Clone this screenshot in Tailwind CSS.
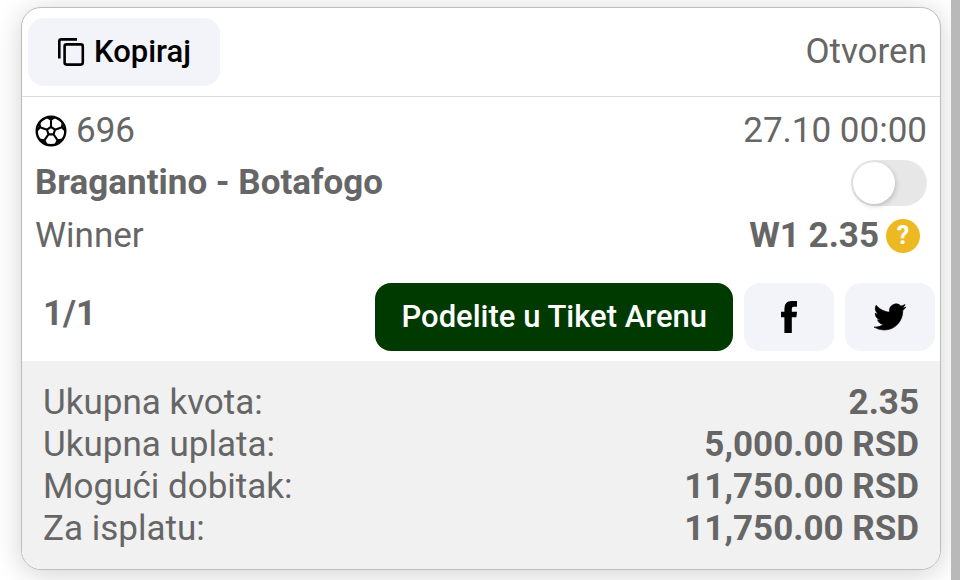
<!DOCTYPE html>
<html lang="sr-Latn">
<head>
<meta charset="utf-8">
<meta name="viewport" content="width=device-width, initial-scale=1">
<title>Tiket</title>
<script src="https://cdn.jsdelivr.net/npm/@tailwindcss/browser@4"></script>
</head>
<body class="flex min-h-screen overflow-hidden bg-white font-['Roboto',sans-serif] text-[35px] leading-[42px] text-[#666]">
<main class="min-w-0 flex-1 pt-[7px] pr-[10px] pb-[10px] pl-[21px]">
  <article class="overflow-hidden rounded-[20px] border border-[#bdbdbd] bg-white shadow-[0_4px_28px_rgba(0,0,0,0.18)]">
    <header class="flex items-center justify-between border-b border-[#dadada] pt-[10px] pr-[13px] pb-[10px] pl-[6px]">
      <button type="button" class="flex h-[68px] items-center gap-[9px] rounded-2xl bg-[#f2f4f9] px-[29px] text-[31px] font-medium text-black">
        <svg class="size-7" viewBox="0 0 28 28" fill="none" stroke="currentColor" stroke-width="2.6" aria-hidden="true">
          <path d="M2.3 20.5V3.4Q2.3 1.4 4.3 1.4H20"/>
          <rect x="7.6" y="6.4" width="18.2" height="20.2" rx="2"/>
        </svg>
        Kopiraj
      </button>
      <span>Otvoren</span>
    </header>

    <section class="px-[13px] pt-2">
      <div class="flex h-[52px] items-center justify-between">
        <div class="flex items-center gap-[9px]">
          <svg class="size-8" viewBox="0 0 32 32" fill="none" stroke="#000" stroke-width="2.1" stroke-linejoin="round" role="img" aria-label="Fudbal">
            <circle cx="16" cy="16" r="14.3" stroke-width="2.4"/>
            <path d="M16 11.8L20 14.7L18.5 19.4H13.5L12 14.7ZM16 11.8V5.2M20 14.7L26.3 12.6M18.5 19.4L22.2 24.6M13.5 19.4L9.8 24.6M12 14.7L5.7 12.6"/>
            <path fill="#000" stroke="none" d="M10.5 2.2L16 6L21.5 2.2ZM26.8 6.5L25.8 12.8L30.6 17.4ZM28.5 23.5L21.8 24.3L19 30.5ZM13 30.5L10.2 24.3L3.5 23.5ZM1.4 17.4L6.2 12.8L5.2 6.5Z"/>
          </svg>
          <span>696</span>
        </div>
        <time datetime="10-27T00:00">27.10 00:00</time>
      </div>
      <div class="flex h-[52px] items-center justify-between">
        <h2 class="font-bold">Bragantino - Botafogo</h2>
        <label class="relative block h-[46px] w-[76px]">
          <input type="checkbox" aria-label="Bragantino - Botafogo" class="peer block h-full w-full appearance-none rounded-full bg-[#e7e7e7]">
          <span class="pointer-events-none absolute top-[2px] left-[2px] size-[42px] rounded-full bg-white shadow-[1px_2px_5px_rgba(0,0,0,0.18)] peer-checked:left-8"></span>
        </label>
      </div>
      <div class="flex h-[54px] items-center justify-between">
        <span>Winner</span>
        <div class="flex items-center gap-[7px] pr-[7px]">
          <strong class="font-bold">W1 2.35</strong>
          <button type="button" aria-label="Pomoć" class="size-[34px] rounded-full bg-[#edb922] text-[25px] leading-[34px] font-bold text-white">?</button>
        </div>
      </div>
    </section>

    <div class="flex items-center justify-between pt-5 pr-[5px] pb-[10px] pl-[21px]">
      <strong class="pb-[6px] font-bold">1/1</strong>
      <div class="flex gap-[11px]">
        <button type="button" class="h-[68px] rounded-2xl bg-[#003a00] px-[26px] text-[31px] font-medium text-white">Podelite u Tiket Arenu</button>
        <button type="button" aria-label="Facebook" class="flex h-[68px] w-[90px] items-center justify-center rounded-2xl bg-[#f2f4f9]">
          <svg class="h-8 w-4" viewBox="0 0 16 32" aria-hidden="true"><path d="M3.4 32V16.2H0V10.8H3.4V7.5Q3.4 0 10.5 0H16V5.8H12.6Q10.8 5.8 10.8 7.8V10.8H16L15.4 16.2H10.8V32Z"/></svg>
        </button>
        <button type="button" aria-label="Twitter" class="flex h-[68px] w-[90px] items-center justify-center rounded-2xl bg-[#f2f4f9]">
          <svg class="size-8" viewBox="0 0 24 24" stroke="#000" stroke-width=".5" aria-hidden="true"><path d="M23.95 4.57a10 10 0 0 1-2.82.77 4.96 4.96 0 0 0 2.16-2.72c-.95.55-2 .95-3.13 1.18a4.92 4.92 0 0 0-8.38 4.48C7.69 8.1 4.07 6.13 1.64 3.16a4.92 4.92 0 0 0 1.52 6.57 4.9 4.9 0 0 1-2.23-.61v.06a4.92 4.92 0 0 0 3.95 4.83 5 5 0 0 1-2.21.08 4.94 4.94 0 0 0 4.6 3.42A9.87 9.87 0 0 1 0 19.54a13.99 13.99 0 0 0 7.56 2.21c9.05 0 14-7.5 14-13.98 0-.21 0-.42-.02-.63a9.94 9.94 0 0 0 2.41-2.57z"/></svg>
        </button>
      </div>
    </div>

    <dl class="bg-[#f1f1f1] px-[21px] pt-[21px] pb-[19px]">
      <div class="flex justify-between"><dt>Ukupna kvota:</dt><dd class="font-bold">2.35</dd></div>
      <div class="flex justify-between"><dt>Ukupna uplata:</dt><dd class="font-bold">5,000.00 RSD</dd></div>
      <div class="flex justify-between"><dt>Mogući dobitak:</dt><dd class="font-bold">11,750.00 RSD</dd></div>
      <div class="flex justify-between"><dt>Za isplatu:</dt><dd class="font-bold">11,750.00 RSD</dd></div>
    </dl>
  </article>
</main>
<div class="relative w-[9px] shrink-0 bg-[#b9b9b9]" aria-hidden="true"></div>
</body>
</html>
